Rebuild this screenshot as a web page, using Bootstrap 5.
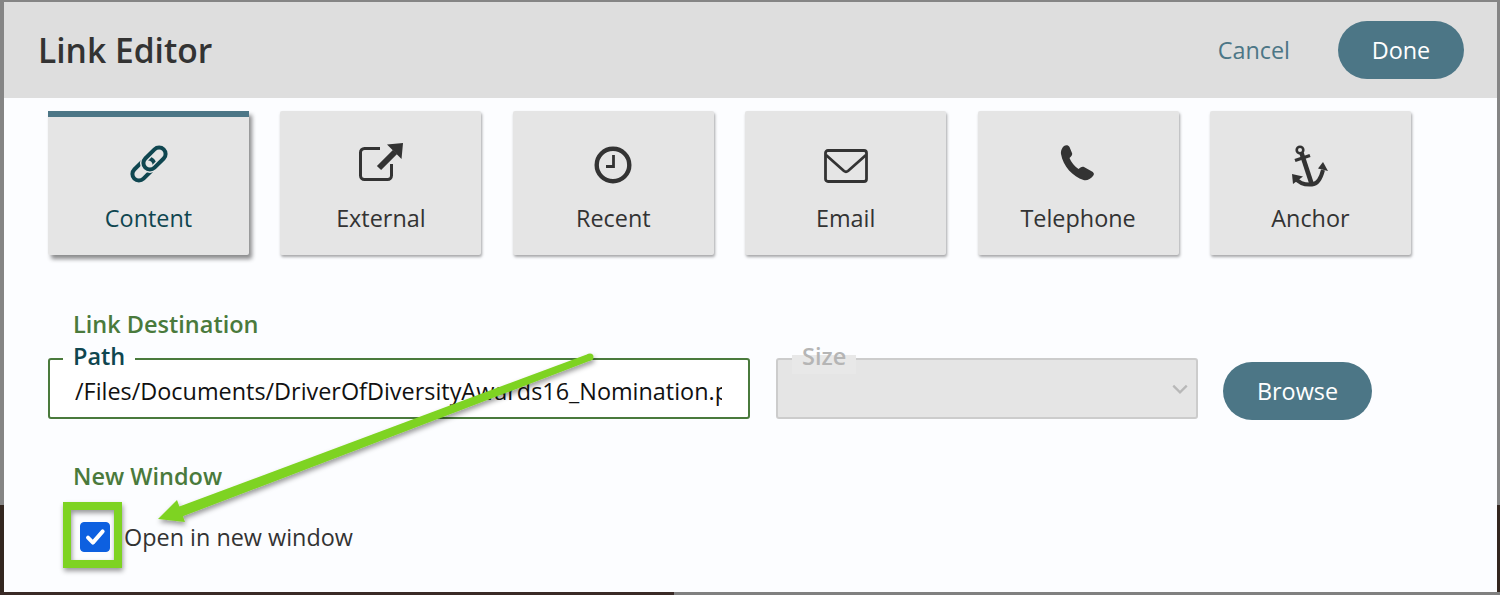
<!DOCTYPE html>
<html lang="en">

<head>
  <meta charset="UTF-8">
  <meta name="viewport" content="width=device-width, initial-scale=1.0">
  <title>Link Editor</title>
  <link href="https://cdn.jsdelivr.net/npm/bootstrap@5.3.0/dist/css/bootstrap.min.css" rel="stylesheet">
  <style>
    html, body { height: 100%; }
    body {
      margin: 0;
      overflow: hidden;
      font-family: "Open Sans", "Liberation Sans", sans-serif;
      font-size: 23.4px;
      color: #333;
      background: linear-gradient(to right, #3a2a26 674px, #808080 674px) bottom / 100% 3px no-repeat,
                  linear-gradient(to bottom, #858585 505px, #33261f 505px);
      padding: 2px 3px 3px 4px;
    }
    .editor-dialog { position: relative; height: 590px; background: #fcfdff; }
    .editor-head { height: 96px; background: #dedede; padding: 0 33px 0 34px; }
    .editor-title { font-size: 33.6px; font-weight: 600; line-height: 1; margin: 2px 0 0; color: #333; }
    .link-cancel { color: #4c7686; text-decoration: none; margin: 2px 48px 0 0; }
    .btn-teal {
      background: #4c7686; color: #fff; border: 0; border-radius: 29px; height: 58px;
      font-size: 23.4px; line-height: 1; padding: 2px 0 0;
    }
    .btn-done { width: 126px; }
    .btn-browse { width: 149px; margin-top: 4px; }
    .editor-body { padding: 13px 0 0 44px; }
    .tile-row { gap: 31.4px; }
    .link-tile {
      width: 201px; height: 144px; background: #e5e5e5; border-radius: 2px; color: #333;
      box-shadow: 1px 2px 3px rgba(0, 0, 0, .35);
    }
    .link-tile.is-active {
      color: #0f4650; border-radius: 0 0 2px 2px;
      box-shadow: inset 0 6px 0 #4c7686, 3px 4px 4px rgba(0, 0, 0, .45);
    }
    .tile-icon { height: 92px; padding-top: 30px; }
    .tile-icon svg { display: block; }
    .nudge-1 { margin-top: 1px; }
    .nudge-4 { margin-top: 4px; }
    .nudge-5 { margin-top: 5px; }
    .nudge-8 { margin-top: 8px; }
    .tile-text { line-height: 30px; }
    .group-title { font-size: 23.5px; font-weight: 600; color: #4a7a3c; line-height: 32px; padding-left: 25px; margin: 0; }
    .dest-title { margin-top: 53px; }
    .field-row { margin-top: 18px; }
    .float-field { position: relative; }
    .float-label {
      position: absolute; left: 15px; top: -17px; padding: 0 10px; font-size: 23.5px; font-weight: 600;
      line-height: 30px; color: #0f4650; background: linear-gradient(to bottom, #fcfdff 53%, #fff 53%);
    }
    .path-field { width: 702px; margin-right: 26px; }
    .path-input.form-control {
      height: 61px; font-size: 23.4px; color: #111; border: 2px solid #4a7a3c; border-radius: 3px;
      padding: 4px 26px 0 25px; background: #fff; box-shadow: none;
    }
    .size-field { width: 422px; margin-right: 25px; }
    .size-label { left: 16px; color: #b5b5b5; background: linear-gradient(to bottom, #fcfdff 43%, #e8e8e8 43%); padding-bottom: 3px; }
    .size-select.form-select {
      height: 61px; background-color: #e5e5e5; border: 2px solid #ccc; border-radius: 3px;
      background-image: url("data:image/svg+xml,%3csvg xmlns='http://www.w3.org/2000/svg' viewBox='0 0 16 12'%3e%3cpath fill='none' stroke='%23b8b8b8' stroke-width='2' d='M2 3l6 6 6-6'/%3e%3c/svg%3e");
      background-position: right 7px center;
      background-size: 18px 14px;
    }
    .window-title { margin-top: 40px; }
    .window-check { margin: 29px 0 0 32px; }
    .window-check .form-check-input {
      width: 30px; height: 30px; margin: 0 14px 0 0; background-color: #0d60e0; border-color: #0d60e0;
      border-radius: 4px; flex: none;
      background-image: url("data:image/svg+xml,%3csvg xmlns='http://www.w3.org/2000/svg' viewBox='0 0 20 20'%3e%3cpath fill='none' stroke='%23fff' stroke-width='2.800' stroke-linecap='round' stroke-linejoin='round' d='M5 10.500l3.500 3.500 7-8'/%3e%3c/svg%3e");
    }
    .window-check label { line-height: 32px; }
    .callout { position: absolute; left: 0; top: 0; pointer-events: none; }
  </style>
</head>

<body>
  <div class="editor-dialog">
    <div class="editor-head d-flex align-items-center justify-content-between">
      <h1 class="editor-title">Link Editor</h1>
      <div class="d-flex align-items-center">
        <a href="#" class="link-cancel">Cancel</a>
        <button class="btn btn-teal btn-done">Done</button>
      </div>
    </div>

    <div class="editor-body">
      <div class="d-flex tile-row">
        <div class="link-tile is-active text-center">
          <div class="tile-icon d-flex justify-content-center">
            <svg class="nudge-4" width="38" height="38" viewBox="0 0 38 38" fill="none">
              <rect x=".5" y="18" width="26" height="13" rx="6.500" stroke="#0f4650" stroke-width="4" transform="rotate(-45 13.500 24.500)"/>
              <rect x="11.500" y="7" width="26" height="13" rx="6.500" stroke="#e5e5e5" stroke-width="7" transform="rotate(-45 24.500 13.500)"/>
              <rect x="11.500" y="7" width="26" height="13" rx="6.500" stroke="#0f4650" stroke-width="4" transform="rotate(-45 24.500 13.500)"/>
            </svg>
          </div>
          <div class="tile-text">Content</div>
        </div>
        <div class="link-tile text-center">
          <div class="tile-icon d-flex justify-content-center">
            <svg class="nudge-1" width="46" height="42" viewBox="0 0 46 42" fill="none" stroke="#333">
              <path d="M22 6.500H6.500a4 4 0 0 0-4 4V33.500a4 4 0 0 0 4 4H29.500a4 4 0 0 0 4-4V22" stroke-width="3"/>
              <path d="M37 10 21 26" stroke-width="6"/>
              <path d="M45 1 29 2.500 43.500 17Z" fill="#333" stroke="none"/>
            </svg>
          </div>
          <div class="tile-text">External</div>
        </div>
        <div class="link-tile text-center">
          <div class="tile-icon d-flex justify-content-center">
            <svg class="nudge-5" width="38" height="38" viewBox="0 0 38 38" fill="none" stroke="#333">
              <circle cx="19" cy="19" r="16.300" stroke-width="4.400"/>
              <path d="M19.500 9V20.500H12" stroke-width="2.800"/>
            </svg>
          </div>
          <div class="tile-text">Recent</div>
        </div>
        <div class="link-tile text-center">
          <div class="tile-icon d-flex justify-content-center">
            <svg class="nudge-8" width="44" height="34" viewBox="0 0 44 34" fill="none" stroke="#333" stroke-width="2.800">
              <rect x="1.500" y="1.500" width="41" height="31" rx="2.500"/>
              <path d="M2 6 20 22c1.300 1 2.700 1 4 0L42 6"/>
            </svg>
          </div>
          <div class="tile-text">Email</div>
        </div>
        <div class="link-tile text-center">
          <div class="tile-icon d-flex justify-content-center">
            <svg class="nudge-4" width="36" height="36" viewBox="0 0 36 36" fill="#333">
              <path d="M4 1C6-.5 8.500 0 9.500 2L12 8C12.500 9.500 12 10.500 11 11.500L9.500 13C11 17 14.500 21.500 18.500 24L20.500 22.500C21.500 21.800 23 21.500 24 22L32 26.500C34 27.500 34.500 29.500 33 31 30.500 34 27 36 23.500 35 13 32 3 21 1 9 .5 6 2 2.500 4 1Z"/>
            </svg>
          </div>
          <div class="tile-text">Telephone</div>
        </div>
        <div class="link-tile text-center">
          <div class="tile-icon d-flex justify-content-center">
            <svg class="nudge-4" width="36" height="42" viewBox="0 0 36 42" fill="#333" stroke="#333">
              <circle cx="8" cy="5" r="3.300" fill="none" stroke-width="2.600"/>
              <path d="M3 15.500 18 10.500" fill="none" stroke-width="3.400"/>
              <path d="M9.500 8 20 40" fill="none" stroke-width="4.600"/>
              <path d="M3 33C7 38 14 40 20 39.500 26 39 29 33 31 25" fill="none" stroke-width="4"/>
              <path d="M0 29 11 31.500 1 39Z" stroke="none"/>
              <path d="M31 17 36 26 26 23.500Z" stroke="none"/>
            </svg>
          </div>
          <div class="tile-text">Anchor</div>
        </div>
      </div>

      <p class="group-title dest-title">Link Destination</p>
      <div class="d-flex align-items-start field-row">
        <div class="float-field path-field">
          <span class="float-label">Path</span>
          <input type="text" class="form-control path-input" value="/Files/Documents/DriverOfDiversityAwards16_Nomination.pdf">
        </div>
        <div class="float-field size-field">
          <span class="float-label size-label">Size</span>
          <select class="form-select size-select" disabled></select>
        </div>
        <button class="btn btn-teal btn-browse">Browse</button>
      </div>

      <p class="group-title window-title">New Window</p>
      <div class="d-flex align-items-center window-check">
        <input class="form-check-input" type="checkbox" id="new-window" checked>
        <label for="new-window">Open in new window</label>
      </div>
    </div>

    <!-- annotation drawn over the dialog, page coords minus dialog offset -->
    <svg class="callout" width="1493" height="590" viewBox="4 2 1493 590">
      <defs>
        <filter id="soft-shadow" x="-10%" y="-10%" width="125%" height="130%">
          <feDropShadow dx="1" dy="3" stdDeviation="2.500" flood-color="#000" flood-opacity=".4"/>
        </filter>
      </defs>
      <g filter="url(#soft-shadow)" fill="#7ed321">
        <circle cx="590" cy="357" r="3.500"/>
        <path d="M588.800 353.700 170 510 173 520 591.200 360.300Z"/>
        <path d="M158 519 177 500 185 522Z"/>
        <rect x="67" y="506" width="51" height="58" fill="none" stroke="#7ed321" stroke-width="8"/>
      </g>
    </svg>
  </div>
</body>

</html>
